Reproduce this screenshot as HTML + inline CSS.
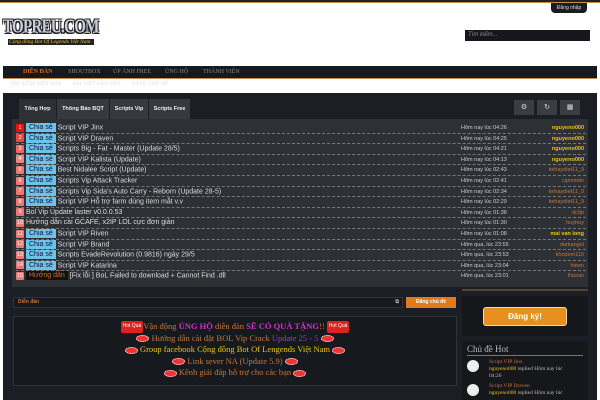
<!DOCTYPE html>
<html><head><meta charset="utf-8"><style>
*{margin:0;padding:0;box-sizing:border-box}
body{width:600px;height:400px;overflow:hidden;background:#fff;font-family:"Liberation Sans",sans-serif;position:relative}
.a{position:absolute}
.row{position:absolute;left:16px;width:570px;height:10.6px;border-bottom:1px dashed #777;font-size:7px;color:#ddd;line-height:10px;white-space:nowrap}
.n{display:inline-block;width:8px;height:8px;background:#e33;color:#fff;font-size:5.5px;text-align:center;line-height:8px;vertical-align:middle;margin-right:2px;border-radius:1px}
.c{display:inline-block;background:#6cc3e6;color:#114;padding:0 3px;height:9px;line-height:9px;font-size:7px;margin-right:2px;vertical-align:middle}
.t{position:absolute;left:445px;color:#ccc;font-size:5.5px}
.u{position:absolute;right:2px;color:#c77636;font-size:5.5px}
.y{color:#e8c31b;font-weight:bold}
.ser{font-family:"Liberation Serif",serif}
.hot{display:inline-block;background:#d22;color:#fff;font-size:5px;padding:0 2px;border-radius:2px;vertical-align:middle;font-family:"Liberation Sans",sans-serif}
.bl{display:inline-block;width:13px;height:7px;background:#e33;border-radius:50%;border:1px dotted #fff;vertical-align:middle}
.tab{position:absolute;top:0;height:20px;background:#363a40;text-align:center}
</style></head><body>
<div class="a" style="left:0;top:0;width:600px;height:2px;background:#222"></div>
<div class="a" style="left:0;top:2px;width:600px;height:1px;background:#c98b4a"></div>
<div class="a" style="left:551px;top:3px;width:36px;height:10px;background:#1a1c20;border-radius:0 0 4px 4px;color:#ddd;font-size:5px;text-align:center;line-height:10px">Đăng nhập</div>
<div class="a ser" style="left:3px;top:17px;font-size:15px;font-weight:bold;color:#ccd;letter-spacing:-0.7px;transform:scaleY(1.3);transform-origin:top left;text-shadow:1px 1px 0 #222,-1px -1px 0 #222,1px -1px 0 #222,-1px 1px 0 #222">TOPREU.COM</div>
<div class="a ser" style="left:8px;top:39px;width:86px;font-size:5.5px;color:#e8c31b;background:#222;padding:0 1px;font-style:italic;white-space:nowrap;overflow:hidden">Cộng đồng Bot Of Legends Việt Nam</div>
<div class="a" style="left:465px;top:30px;width:125px;height:11px;background:#15171b;color:#888;font-size:6px;font-style:italic;line-height:11px;padding-left:3px">Tìm kiếm...</div>
<div class="a" style="left:3px;top:66px;width:594px;height:13px;background:#16191e;border-bottom:1px solid #c98b4a;font-size:6px;line-height:13px;color:#888;font-family:'Liberation Serif',serif">
<span class="a" style="left:20px;color:#d96b1e;font-weight:bold">DIỄN ĐÀN</span><span class="a" style="left:65px">SHOUTBOX</span><span class="a" style="left:110px">ÚP ẢNH FREE</span><span class="a" style="left:162px">ỦNG HỘ</span><span class="a" style="left:200px">THÀNH VIÊN</span></div>
<div class="a" style="left:10px;top:82px;font-size:5px;color:#ddd;font-family:'Liberation Serif',serif;word-spacing:1px">TÌM KIẾM DIỄN ĐÀN &nbsp; &nbsp; BÀI VIẾT GẦN ĐÂY &nbsp; &nbsp; ĐĂNG CHỦ ĐỀ</div>
<div class="a" style="left:3px;top:93px;width:594px;height:307px;background:#1b1e24"></div>
<div class="a" style="left:19px;top:99px;width:171px;height:20px;font-size:5.5px;font-weight:bold;color:#eee;line-height:20px">
<span class="tab" style="left:0;width:37px;background:#2d3035">Tổng Hợp</span><span class="tab" style="left:38px;width:52px">Thông Báo BQT</span><span class="tab" style="left:91px;width:38px">Scripts Vip</span><span class="tab" style="left:130px;width:41px">Scripts Free</span></div>
<div class="a" style="left:514px;top:100px;width:20px;height:15px;background:#3a3e44;color:#ddd;font-size:7px;text-align:center;line-height:15px">⚙</div>
<div class="a" style="left:537px;top:100px;width:20px;height:15px;background:#3a3e44;color:#ddd;font-size:7px;text-align:center;line-height:15px">↻</div>
<div class="a" style="left:560px;top:100px;width:20px;height:15px;background:#3a3e44;color:#ddd;font-size:7px;text-align:center;line-height:15px">▦</div>
<div class="a" style="left:12px;top:119px;width:576px;height:168px;background:#2d3035"></div>
<div class="a" style="left:0;top:0">
<div class="row" style="top:123px"><span class="n" style="background:#e11">1</span><span class="c">Chia sẻ</span>Script VIP Jinx<span class="t">Hôm nay lúc 04:26</span><span class="u y">nguyeno000</span></div>
<div class="row" style="top:133.6px"><span class="n" style="background:#e44">2</span><span class="c">Chia sẻ</span>Script VIP Draven<span class="t">Hôm nay lúc 04:25</span><span class="u y">nguyeno000</span></div>
<div class="row" style="top:144.2px"><span class="n" style="background:#e66">3</span><span class="c">Chia sẻ</span>Scripts Big - Fat - Master (Update 28/5)<span class="t">Hôm nay lúc 04:21</span><span class="u y">nguyeno000</span></div>
<div class="row" style="top:154.8px"><span class="n" style="background:#e88">4</span><span class="c">Chia sẻ</span>Script VIP Kalista (Update)<span class="t">Hôm nay lúc 04:13</span><span class="u y">nguyeno000</span></div>
<div class="row" style="top:165.4px"><span class="n" style="background:#e77">5</span><span class="c">Chia sẻ</span>Best Nidalee Script (Update)<span class="t">Hôm nay lúc 02:43</span><span class="u">kehaydiet11_9</span></div>
<div class="row" style="top:176px"><span class="n" style="background:#e77">6</span><span class="c">Chia sẻ</span>Scripts Vip Attack Tracker<span class="t">Hôm nay lúc 02:41</span><span class="u">cipmmds</span></div>
<div class="row" style="top:186.6px"><span class="n" style="background:#e77">7</span><span class="c">Chia sẻ</span>Scripts Vip Sida's Auto Carry - Reborn (Update 28-5)<span class="t">Hôm nay lúc 02:34</span><span class="u">kehaydiet11_9</span></div>
<div class="row" style="top:197.2px"><span class="n" style="background:#e77">8</span><span class="c">Chia sẻ</span>Script VIP Hỗ trợ farm dùng item mắt v.v<span class="t">Hôm nay lúc 02:29</span><span class="u">kehaydiet11_9</span></div>
<div class="row" style="top:207.8px"><span class="n" style="background:#e77">9</span>Bol Vip Update laster v0.0.0.53<span class="t">Hôm nay lúc 01:38</span><span class="u">dc9p</span></div>
<div class="row" style="top:218.4px"><span class="n" style="background:#e77">10</span>Hướng dẫn cài GCAFE, x2IP LOL cực đơn giản<span class="t">Hôm nay lúc 01:30</span><span class="u">huyhuy</span></div>
<div class="row" style="top:229px"><span class="n" style="background:#e77">11</span><span class="c">Chia sẻ</span>Script VIP Riven<span class="t">Hôm nay lúc 01:08</span><span class="u y">mai van long</span></div>
<div class="row" style="top:239.6px"><span class="n" style="background:#e77">12</span><span class="c">Chia sẻ</span>Script VIP Brand<span class="t">Hôm qua, lúc 23:55</span><span class="u">darkangel</span></div>
<div class="row" style="top:250.2px"><span class="n" style="background:#e77">13</span><span class="c">Chia sẻ</span>Scripts EvadeRevolution (0.9816) ngày 29/5<span class="t">Hôm qua, lúc 23:53</span><span class="u">khodem110</span></div>
<div class="row" style="top:260.8px"><span class="n" style="background:#e77">14</span><span class="c">Chia sẻ</span>Script VIP Katarina<span class="t">Hôm qua, lúc 23:04</span><span class="u">hieen</span></div>
<div class="row" style="top:271.4px;border:none"><span class="n" style="background:#e77">15</span><span class="c" style="background:#111;color:#d96b1e">Hướng dẫn</span>[Fix lỗi ] BoL Failed to download + Cannot Find .dll<span class="t">Hôm qua, lúc 23:01</span><span class="u">lhasan</span></div>
</div>
<div class="a" style="left:13px;top:297px;width:390px;height:11px;border:1px solid #333;background:#16191e;color:#c77636;font-size:5px;font-weight:bold;line-height:9px;padding-left:4px">Diễn đàn<span style="position:absolute;right:3px;color:#aaa">⧉</span></div>
<div class="a" style="left:406px;top:297px;width:50px;height:11px;background:#e07a1e;color:#fff;font-size:5px;text-align:center;line-height:11px;font-weight:bold">Đăng chủ đề</div>
<div class="a ser" style="left:13px;top:316px;width:444px;height:70px;border:1px solid #333;background:#16191e;text-align:center;font-size:8.5px;line-height:11.5px;color:#c77636;padding-top:4px">
<div><span class="hot">Hot Quà</span>Vận động <b style="color:#c3c">ỦNG HỘ</b> diễn đàn <b style="color:#c3c">SẼ CÓ QUÀ TẶNG</b>!! <span class="hot">Hot Quà</span></div>
<div><span class="bl"></span> Hướng dẫn cài đặt BOL Vip Crack <span style="color:#a3c">Update 25 - 5</span> <span class="bl"></span></div>
<div style="color:#e8c31b"><span class="bl"></span> Group facebook Cộng đồng Bot Of Lengends Việt Nam <span class="bl"></span></div>
<div><span class="bl"></span> Link sever NA (Update 5.9) <span class="bl"></span></div>
<div><span class="bl"></span> Kênh giải đáp hỗ trợ cho các bạn <span class="bl"></span></div>
</div>
<div class="a" style="left:462px;top:289px;width:126px;height:2px;background:#5a4230"></div>
<div class="a" style="left:462px;top:296px;width:126px;height:40px;background:#15171b"></div>
<div class="a" style="left:483px;top:307px;width:84px;height:19px;background:#e8901e;border:1px solid #f5d9a8;border-radius:3px;color:#fff;font-size:8px;font-weight:bold;text-align:center;line-height:17px">Đăng ký!</div>
<div class="a" style="left:462px;top:341px;width:126px;height:59px;background:#15171b"></div>
<div class="a ser" style="left:467px;top:344px;width:116px;font-size:9px;color:#bbb;border-bottom:1px solid #777;padding-bottom:1px">Chủ đề Hot</div>
<div class="a" style="left:467px;top:360px;width:12px;height:12px;border-radius:50%;background:#eee"></div>
<div class="a ser" style="left:489px;top:359px;font-size:5.5px;line-height:7px;color:#bbb"><span style="color:#c77636">Script VIP Jinx</span><br><span style="color:#e8c31b">nguyeno000</span> replied Hôm nay lúc<br>04:26</div>
<div class="a" style="left:467px;top:384px;width:12px;height:12px;border-radius:50%;background:#eee"></div>
<div class="a ser" style="left:489px;top:383px;font-size:5.5px;line-height:7px;color:#bbb"><span style="color:#c77636">Script VIP Draven</span><br><span style="color:#e8c31b">nguyeno000</span> replied Hôm nay lúc</div>
</body></html>
